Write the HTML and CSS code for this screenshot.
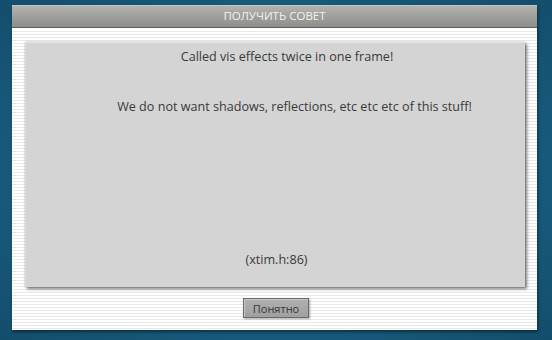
FILE: index.html
```html
<!DOCTYPE html>
<html>
<head>
<meta charset="utf-8">
<link rel="stylesheet" href="styles.css">
</head>
<body>
<div class="dialog">
  <div class="title">ПОЛУЧИТЬ СОВЕТ</div>
  <div class="content">
    <div class="panel">
      <div class="line line1">Called vis effects twice in one frame!</div>
      <div class="line line2">We do not want shadows, reflections, etc etc etc of this stuff!</div>
      <div class="line line3">(xtim.h:86)</div>
    </div>
    <div class="actions">
      <button class="btn">Понятно</button>
    </div>
  </div>
</div>
</body>
</html>
```
FILE: styles.css
```css
html, body {
  margin: 0;
  padding: 0;
}
body {
  width: 552px;
  height: 340px;
  overflow: hidden;
  background: radial-gradient(ellipse at center, #1c6184 0%, #175979 70%, #134d6b 100%);
  font-family: "Open Sans", "DejaVu Sans", sans-serif;
  padding-top: 5px;
  box-sizing: border-box;
}
.dialog {
  margin-left: 12px;
  width: 525px;
  height: 325px;
  display: flex;
  flex-direction: column;
  box-shadow: 1px 2px 3px rgba(0, 0, 0, 0.45);
}
.title {
  height: 22px;
  line-height: 22px;
  text-align: center;
  color: #f2f2f0;
  font-size: 11.5px;
  letter-spacing: 0;
  background: linear-gradient(#b4b4b0, #a0a09c 50%, #8e8e8a);
  border-bottom: 1px solid #5e5e5a;
  box-shadow: inset 0 1px 0 #c4c4c0;
}
.content {
  flex: 1;
  display: flex;
  flex-direction: column;
  padding: 13px 12px 0 13px;
  border-top: 1px solid #ffffff;
  background: repeating-linear-gradient(180deg, #ffffff 0px, #ffffff 2px, #e9e9e9 2px, #e9e9e9 3px);
}
.panel {
  height: 245px;
  box-sizing: border-box;
  background: #d4d4d4;
  border-top: 1px solid #e2e2e2;
  border-left: 1px solid #dedede;
  box-shadow: 2px 2px 3px rgba(0, 0, 0, 0.5), 0 0 2px rgba(0, 0, 0, 0.25);
  display: flex;
  flex-direction: column;
  padding: 6px 0 19px 0;
  color: #3a3a3a;
  font-size: 12.6px;
}
.line {
  text-align: center;
  line-height: 16px;
}
.line1 {
  padding-left: 23px;
}
.line2 {
  margin-top: 34px;
  padding-left: 38px;
}
.line3 {
  margin-top: auto;
  padding-left: 2px;
}
.actions {
  display: flex;
  justify-content: center;
  padding-top: 11px;
}
.btn {
  width: 66px;
  height: 20px;
  padding: 0;
  font-family: "Open Sans", "DejaVu Sans", sans-serif;
  font-size: 11px;
  color: #34343e;
  background: linear-gradient(#b0b0b0, #a0a0a0);
  border: 1px solid #6a6a6a;
  box-shadow: inset 1px 1px 0 #c6c6c6, 1px 1px 2px rgba(0, 0, 0, 0.35);
  margin-left: 2px;
}
```
